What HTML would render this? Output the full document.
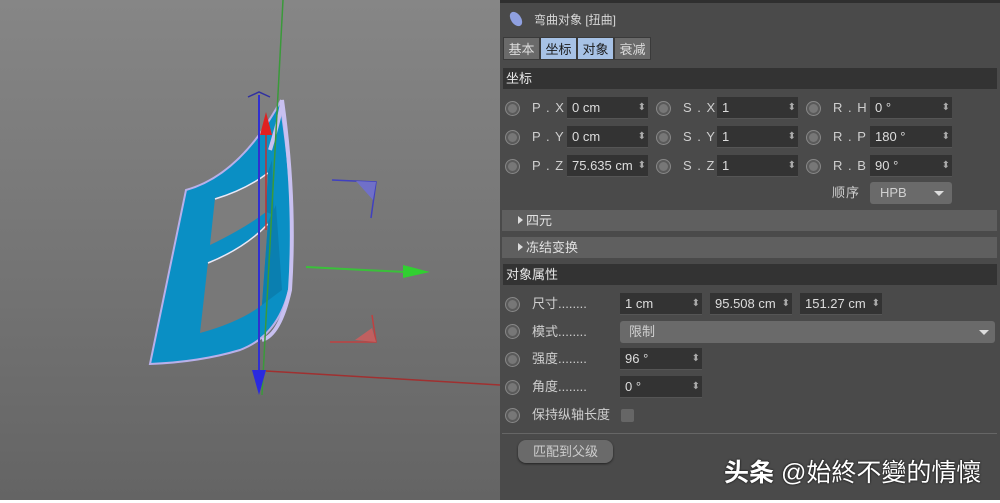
<!DOCTYPE html>
<html><head><meta charset="utf-8"><style>
*{margin:0;padding:0;box-sizing:border-box}
body{width:1000px;height:500px;overflow:hidden;position:relative;font-family:"Liberation Sans","Noto Sans CJK SC",sans-serif;font-size:13px;color:#d0d0d0}
#vp{position:absolute;left:0;top:0;width:500px;height:500px;background:linear-gradient(#868686,#727272 60%,#646464)}
#pn{position:absolute;left:500px;top:0;width:500px;height:500px;background:#4a4a4a;border-top:3px solid #2f2f2f}
.a{position:absolute;white-space:nowrap}
.tab{position:absolute;top:37px;height:23px;width:37px;font-size:13px;line-height:23px;text-align:center;background:#6a6a6a;color:#ddd;border:1px solid #3a3a3a}
.tab.on{background:#a7c2e6;color:#1a1a1a}
.hd{position:absolute;left:503px;width:494px;height:21px;background:#333;color:#e8e8e8;font-size:13px;line-height:21px;padding-left:3px}
.cl{position:absolute;left:502px;width:495px;height:21px;background:#5f5f5f;color:#e0e0e0;line-height:21px;padding-left:24px}
.cl:before{content:"";position:absolute;left:16px;top:6px;border-left:5px solid #ddd;border-top:4px solid transparent;border-bottom:4px solid transparent}
.rd{position:absolute;width:13px;height:13px;border-radius:50%;background:#777;border:2px solid #5a5a5a;box-shadow:0 0 0 1px #888}
.in{position:absolute;height:22px;background:#333;color:#ddd;line-height:22px;padding-left:5px;font-size:13px;overflow:hidden;border-bottom:1px solid #555}
.in:after{content:"⬍";position:absolute;right:2px;top:0;font-size:10px;color:#aaa}
.lb{position:absolute;color:#cfcfcf;font-size:13px;letter-spacing:1px;height:22px;line-height:22px}
</style></head><body>
<div id="vp">
<svg width="500" height="500" viewBox="0 0 500 500">
<path d="M150 364 L186 190 Q240 175 280 102 Q296 200 290 285 Q280 335 240 350 Q200 362 150 364 Z" fill="#0a8fc4" stroke="#b8b0ea" stroke-width="2"/>
<path d="M215 198 L210 245 Q245 228 266 212 L268 172 Q245 190 215 198 Z" fill="#7d7d7d"/>
<path d="M208 262 L200 333 Q240 322 262 305 L268 222 Q245 248 208 262 Z" fill="#787878"/>
<path d="M215 199 Q245 190 268 173" fill="none" stroke="#e8e8f8" stroke-width="1.5"/>
<path d="M208 263 Q245 248 268 224" fill="none" stroke="#e8e8f8" stroke-width="1.5"/>
<path d="M266 212 L268 172 L272 160 L274 215 Z" fill="#0a7fb0"/>
<path d="M262 305 L268 222 L276 205 L282 290 Z" fill="#0a7fb0"/>
<path d="M270 150 Q282 110 282 100 Q296 200 290 290 Q280 335 262 340" fill="none" stroke="#c8c0f0" stroke-width="4"/>
<line x1="283" y1="0" x2="262" y2="395" stroke="#3a9a3a" stroke-width="1.5"/>
<line x1="259" y1="95" x2="259" y2="385" stroke="#3030d0" stroke-width="2"/>
<path d="M248 97 L259 92 L270 97" fill="none" stroke="#3030a0" stroke-width="1.5"/>
<path d="M266 112 L260 135 L272 135 Z" fill="#e02020"/>
<line x1="266" y1="135" x2="266" y2="230" stroke="#c03030" stroke-width="1.5"/>
<path d="M252 370 L259 395 L266 370 Z" fill="#2a2ae0"/>
<line x1="266" y1="371" x2="500" y2="385" stroke="#a03030" stroke-width="1.5"/>
<line x1="306" y1="267" x2="405" y2="272" stroke="#3ac03a" stroke-width="2"/>
<path d="M403 265 L430 272 L403 278 Z" fill="#30d030"/>
<path d="M332 180 L376 182 L371 218" fill="none" stroke="#4040c0" stroke-width="1.5"/><path d="M356 181 L376 182 L373 200 Z" fill="#7070c8"/>
<path d="M372 315 L376 342 L330 342" fill="none" stroke="#c04040" stroke-width="1.5"/><path d="M355 340 L372 328 L376 342 Z" fill="#c06060"/>
</svg>
</div>
<div id="pn"></div>
<svg class="a" style="left:507px;top:10px" width="18" height="18"><ellipse cx="9" cy="9" rx="5" ry="8" transform="rotate(-35 9 9)" fill="#8fa0e0"/></svg>
<div class="a" style="left:534px;top:11px;color:#d8d8d8;font-size:12px">弯曲对象 [扭曲]</div>
<div class="tab" style="left:503px">基本</div><div class="tab on" style="left:540px">坐标</div><div class="tab on" style="left:577px">对象</div><div class="tab" style="left:614px">衰减</div>
<div class="hd" style="top:68px">坐标</div>
<div class="rd" style="left:506px;top:102px"></div><div class="lb" style="left:532px;top:97px">P . X</div><div class="in" style="left:567px;top:97px;width:81px">0 cm</div>
<div class="rd" style="left:657px;top:102px"></div><div class="lb" style="left:683px;top:97px">S . X</div><div class="in" style="left:717px;top:97px;width:81px">1</div>
<div class="rd" style="left:807px;top:102px"></div><div class="lb" style="left:833px;top:97px">R . H</div><div class="in" style="left:870px;top:97px;width:82px">0 °</div>
<div class="rd" style="left:506px;top:131px"></div><div class="lb" style="left:532px;top:126px">P . Y</div><div class="in" style="left:567px;top:126px;width:81px">0 cm</div>
<div class="rd" style="left:657px;top:131px"></div><div class="lb" style="left:683px;top:126px">S . Y</div><div class="in" style="left:717px;top:126px;width:81px">1</div>
<div class="rd" style="left:807px;top:131px"></div><div class="lb" style="left:833px;top:126px">R . P</div><div class="in" style="left:870px;top:126px;width:82px">180 °</div>
<div class="rd" style="left:506px;top:160px"></div><div class="lb" style="left:532px;top:155px">P . Z</div><div class="in" style="left:567px;top:155px;width:81px;padding-right:12px">75.635 cm</div>
<div class="rd" style="left:657px;top:160px"></div><div class="lb" style="left:683px;top:155px">S . Z</div><div class="in" style="left:717px;top:155px;width:81px">1</div>
<div class="rd" style="left:807px;top:160px"></div><div class="lb" style="left:833px;top:155px">R . B</div><div class="in" style="left:870px;top:155px;width:82px">90 °</div>
<div class="lb" style="left:832px;top:182px">顺序</div>
<div class="a" style="left:870px;top:182px;width:82px;height:22px;background:#6a6a6a;border-radius:3px;line-height:22px;padding-left:10px">HPB<span style="position:absolute;right:8px;top:9px;border-top:5px solid #ddd;border-left:5px solid transparent;border-right:5px solid transparent"></span></div>
<div class="cl" style="top:210px">四元</div>
<div class="cl" style="top:237px">冻结变换</div>
<div class="hd" style="top:264px">对象属性</div>
<div class="rd" style="left:506px;top:298px"></div><div class="lb" style="left:532px;top:293px;letter-spacing:0">尺寸........</div>
<div class="in" style="left:620px;top:293px;width:82px">1 cm</div><div class="in" style="left:710px;top:293px;width:82px;padding-right:12px">95.508 cm</div><div class="in" style="left:800px;top:293px;width:82px;padding-right:12px">151.27 cm</div>
<div class="rd" style="left:506px;top:325px"></div><div class="lb" style="left:532px;top:321px;letter-spacing:0">模式........</div>
<div class="a" style="left:620px;top:321px;width:375px;height:22px;background:#6a6a6a;border-radius:3px;line-height:22px;padding-left:9px">限制<span style="position:absolute;right:6px;top:9px;border-top:5px solid #ddd;border-left:5px solid transparent;border-right:5px solid transparent"></span></div>
<div class="rd" style="left:506px;top:353px"></div><div class="lb" style="left:532px;top:348px;letter-spacing:0">强度........</div><div class="in" style="left:620px;top:348px;width:82px">96 °</div>
<div class="rd" style="left:506px;top:381px"></div><div class="lb" style="left:532px;top:376px;letter-spacing:0">角度........</div><div class="in" style="left:620px;top:376px;width:82px">0 °</div>
<div class="rd" style="left:506px;top:409px"></div><div class="lb" style="left:532px;top:404px;letter-spacing:0">保持纵轴长度</div>
<div class="a" style="left:621px;top:409px;width:13px;height:13px;background:#666;border-radius:2px"></div>
<div class="a" style="left:502px;top:433px;width:495px;height:1px;background:#666"></div>
<div class="a" style="left:518px;top:440px;width:95px;height:23px;background:#6a6a6a;border-radius:8px;text-align:center;line-height:23px;color:#ccc;box-shadow:0 1px 2px #222">匹配到父级</div>
<div class="a" style="left:724px;top:453px;font-size:25px;color:#fff;font-family:'Liberation Sans','Noto Sans CJK TC',sans-serif;text-shadow:0 0 2px #000"><b>头条</b> @始終不變的情懷</div>
</body></html>
